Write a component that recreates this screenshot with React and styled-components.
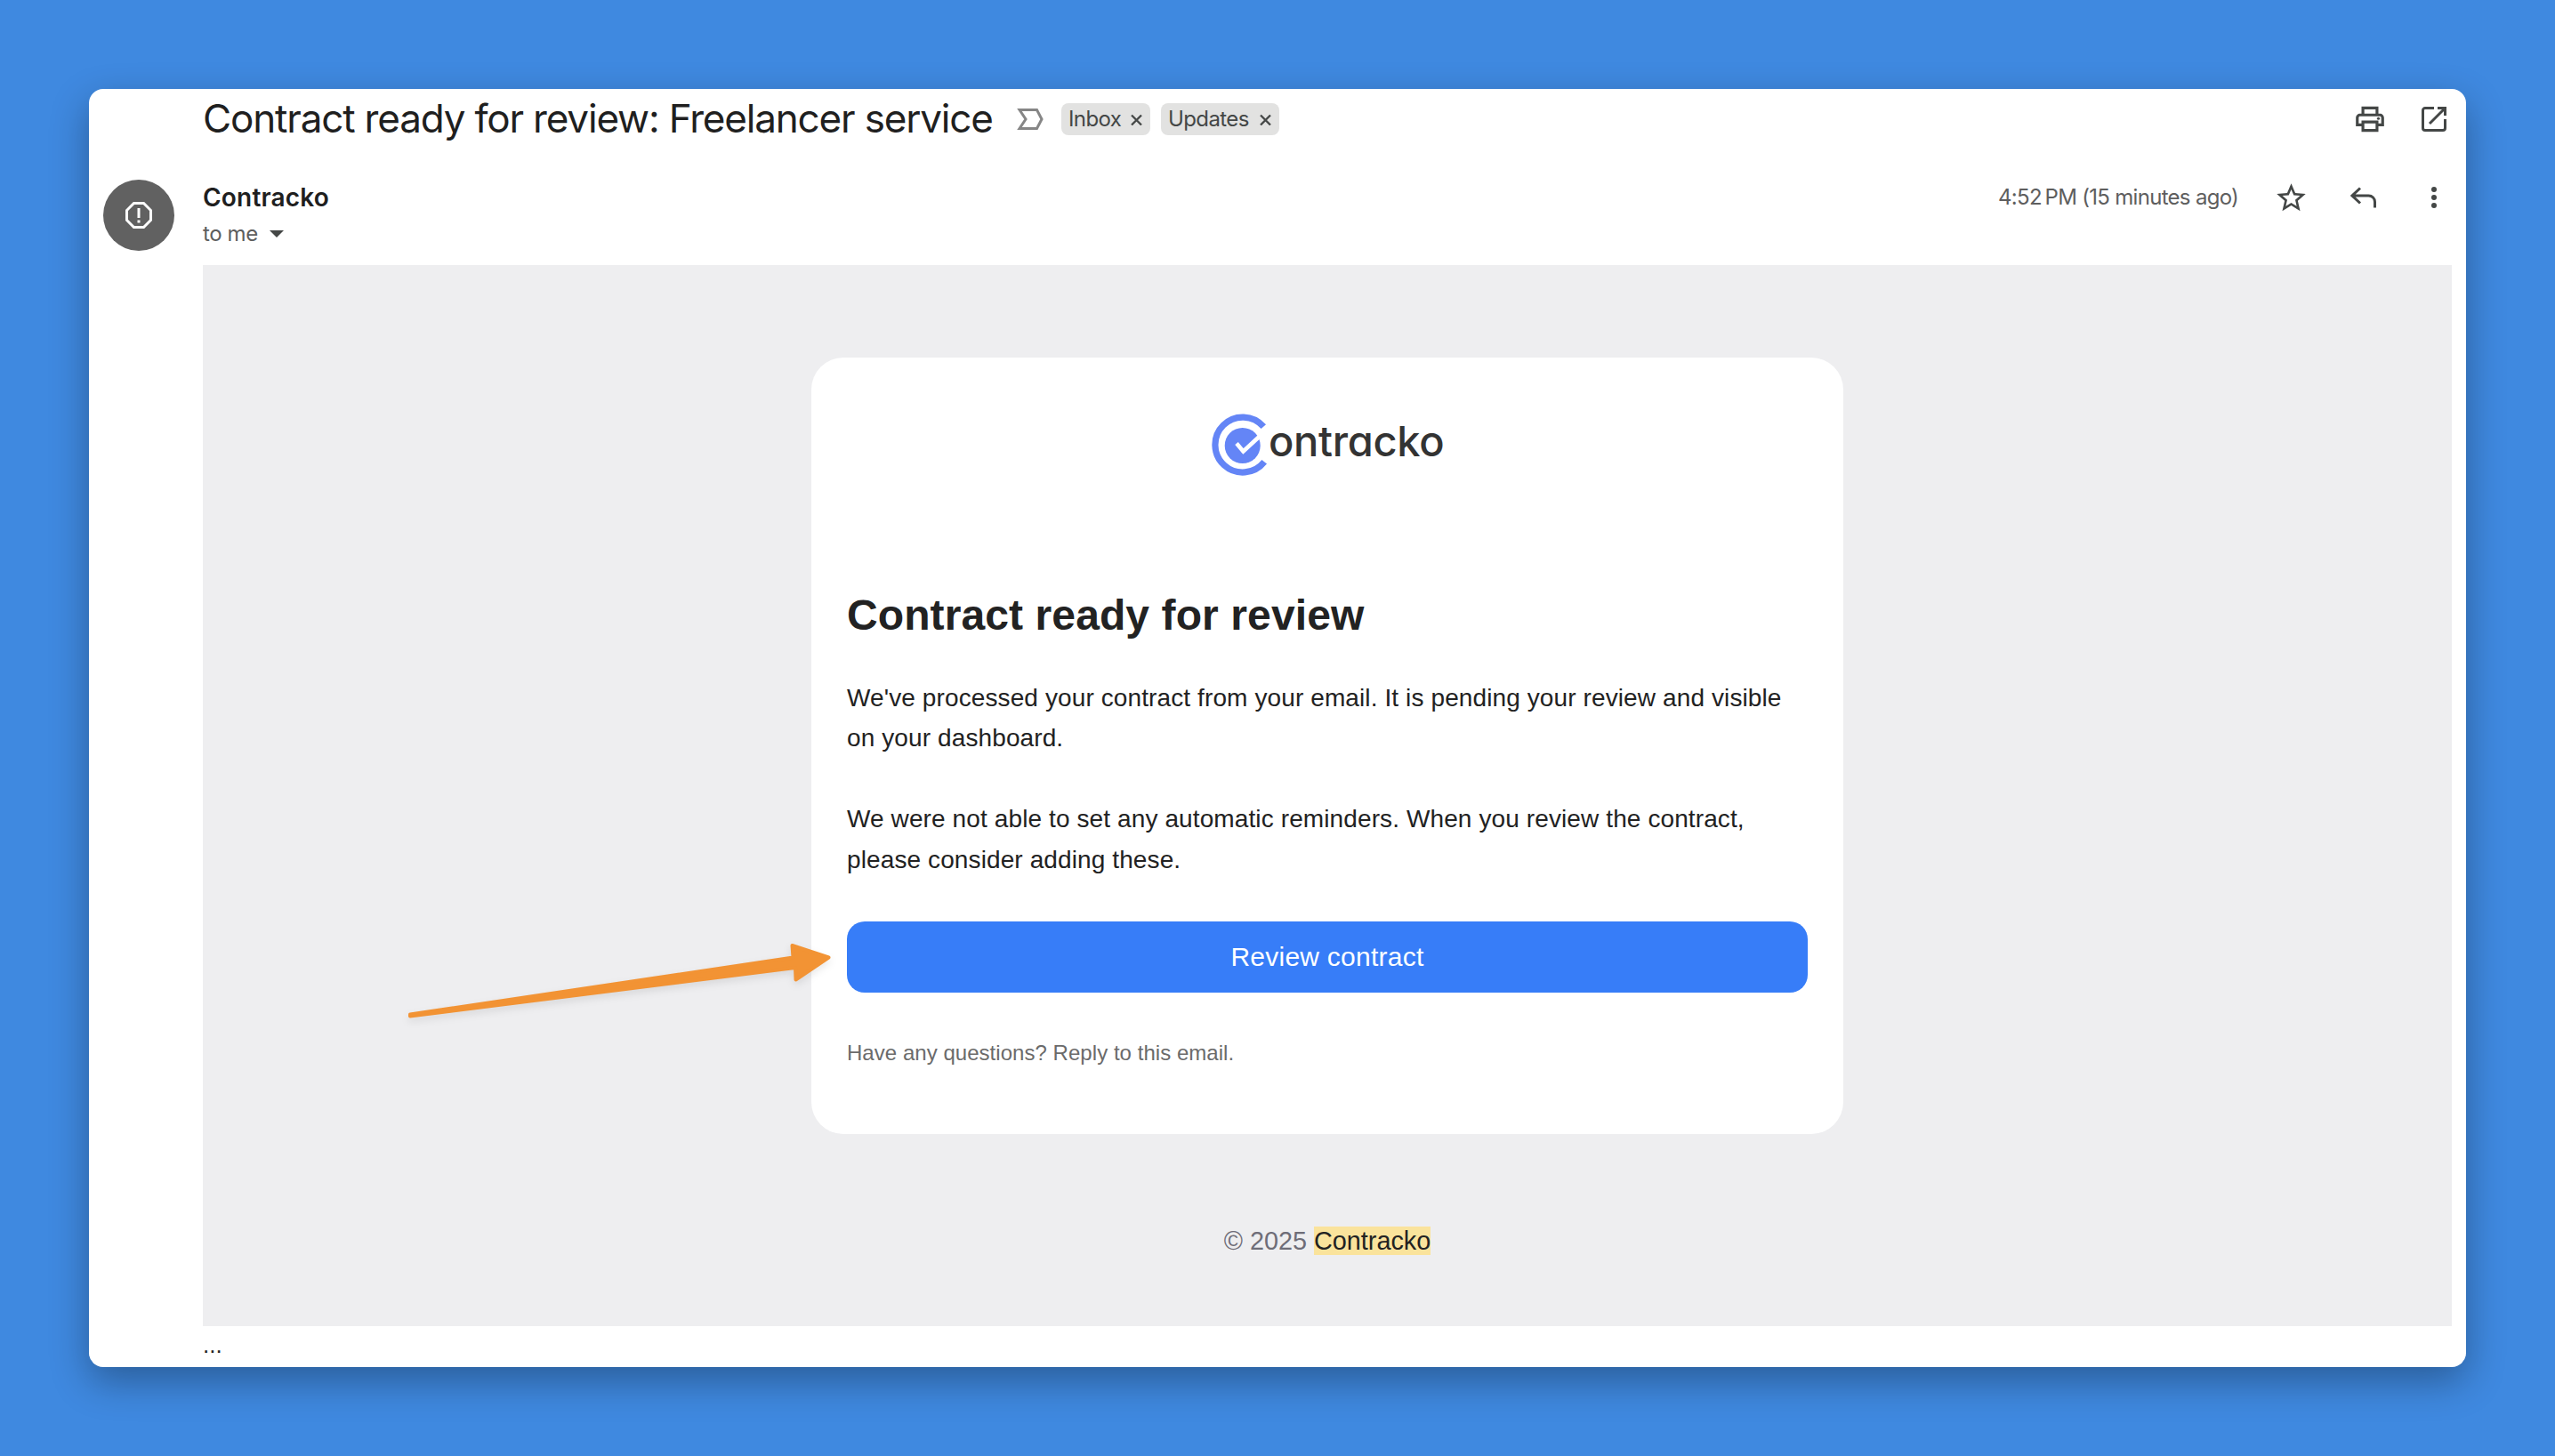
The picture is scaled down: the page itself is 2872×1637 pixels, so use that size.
import React from 'react';
import styled, { createGlobalStyle } from 'styled-components';
import { MdStarBorder, MdOutlinePrint } from 'react-icons/md';

const GlobalStyle = createGlobalStyle`
  * {
    box-sizing: border-box;
  }

  body {
    margin: 0;
    background: #3f89e0;
    font-family: Inter, 'Liberation Sans', sans-serif;
    color: #1f1f1f;
  }

  svg {
    flex: none;
  }
`;

const Page = styled.div`
  position: relative;
  width: 2872px;
  height: 1637px;
  padding: 100px;
  overflow: hidden;
  background: #3f89e0;
`;

const Window = styled.main`
  height: 1437px;
  padding: 0 16px 0 128px;
  border-radius: 16px;
  background: #fff;
  box-shadow: 0 16px 44px rgba(0, 0, 0, 0.32);
`;

const SubjectBar = styled.header`
  display: flex;
  align-items: center;
  height: 68px;
`;

const Subject = styled.h1`
  width: 915px;
  margin: 0;
  padding-bottom: 2px;
  font-size: 44px;
  font-weight: 400;
  line-height: 60px;
  letter-spacing: -1.17px;
  white-space: nowrap;
`;

const Labels = styled.div`
  display: flex;
  gap: 12px;
  margin-left: 20px;
`;

const Label = styled.span`
  display: flex;
  align-items: center;
  justify-content: space-between;
  width: ${props => props.$width}px;
  height: 36px;
  padding: 0 9px 0 8px;
  border-radius: 8px;
  background: #e2e2e1;
  color: #444746;
  font-size: 24px;
  line-height: 34px;
  letter-spacing: -0.6px;
  white-space: nowrap;
`;

const LabelName = styled.span`
  padding-bottom: 1px;
`;

const SubjectActions = styled.div`
  display: flex;
  align-items: center;
  gap: 39px;
  margin-left: auto;
  padding-right: 6px;
  color: #444746;
`;

const SenderBar = styled.section`
  display: flex;
  height: 130px;
  margin-left: -112px;
  padding-top: 34px;
`;

const Avatar = styled.div`
  display: flex;
  align-items: center;
  justify-content: center;
  width: 80px;
  height: 80px;
  margin-right: 32px;
  border-radius: 50%;
  background: #616161;
`;

const SenderInfo = styled.div`
  flex: 1;
`;

const SenderName = styled.div`
  font-size: 28px;
  font-weight: 600;
  line-height: 40px;
  letter-spacing: 0.2px;
`;

const Recipient = styled.div`
  display: flex;
  align-items: center;
  gap: 13px;
  color: #5e5e5e;
  font-size: 24px;
  line-height: 42px;
  letter-spacing: -0.4px;
`;

const MessageActions = styled.div`
  display: flex;
  align-items: center;
  height: 40px;
  padding-right: 17px;
  color: #444746;
`;

const Time = styled.span`
  width: 310px;
  padding-bottom: 2px;
  color: #5e5e5e;
  font-size: 24px;
  letter-spacing: -0.7px;
  white-space: nowrap;
`;

const ReplyButton = styled.span`
  display: flex;
  margin: 0 61px 0 47px;
`;

const MailBody = styled.section`
  display: flex;
  flex-direction: column;
  align-items: center;
  height: 1193px;
  padding-top: 104px;
  background: #eeeef0;
  font-family: 'Liberation Sans', Arial, sans-serif;
`;

const Card = styled.article`
  display: flex;
  flex-direction: column;
  width: 1160px;
  height: 873px;
  padding: 63px 40px 0;
  border-radius: 36px;
  background: #fff;
  color: #222;
`;

const Logo = styled.div`
  display: flex;
  align-self: center;
  width: 260px;
  height: 70px;
  margin-bottom: 127px;
`;

const LogoText = styled.span`
  margin-left: -6px;
  color: #333;
  font-family: Inter, sans-serif;
  font-size: 47px;
  font-weight: 500;
  font-feature-settings: 'cv11';
  line-height: 61px;
  letter-spacing: -0.3px;
`;

const Heading = styled.h2`
  margin: 0 0 40px;
  font-size: 48px;
  line-height: 60px;
  letter-spacing: 0.1px;
  white-space: nowrap;
`;

const Paragraph = styled.p`
  margin: 0 0 45.4px;
  font-size: 28px;
  line-height: 45.4px;
  letter-spacing: 0.11px;
  white-space: nowrap;
`;

const ReviewButton = styled.button`
  flex: none;
  height: 80px;
  margin: 2px 0 50px;
  border: 0;
  border-radius: 20px;
  background: #377df8;
  color: #fff;
  font: 30px 'Liberation Sans', Arial, sans-serif;
  letter-spacing: 0.25px;
`;

const Note = styled.div`
  color: #6b6b6b;
  font-size: 24px;
  line-height: 36px;
  letter-spacing: 0.04px;
`;

const Copyright = styled.footer`
  margin-top: 100px;
  color: #6e6d78;
  font-size: 28.8px;
  line-height: 40px;
`;

const Highlight = styled.mark`
  background: #fae39c;
  color: #222;
`;

const Trimmed = styled.div`
  font-family: 'Liberation Sans', Arial, sans-serif;
  font-size: 26px;
  line-height: 43px;
`;

const Pointer = styled.svg`
  position: absolute;
  left: 440px;
  top: 1040px;
  filter: drop-shadow(0 4px 4px rgba(0, 0, 0, 0.09));
`;

const labels = [
  { name: 'Inbox', width: 100 },
  { name: 'Updates', width: 133 },
];

const CloseIcon = () => (
  <svg width="13" height="13" viewBox="0 0 13 13" fill="none" stroke="#444746" strokeWidth="2.3">
    <path d="M1 1.500l11 11M12 1.500L1 12.500" />
  </svg>
);

const ImportantIcon = () => (
  <svg width="30" height="24" viewBox="0 0 30 24" fill="none" stroke="#868686" strokeWidth="3">
    <path d="M3 1.500h19.500L28 12l-5.500 10.500H3L10 12z" />
  </svg>
);

const OpenIcon = () => (
  <svg width="28" height="28" viewBox="0 0 28 28" fill="none" stroke="currentColor" strokeWidth="3">
    <path d="M14 1.500H4A2.500 2.500 0 0 0 1.500 4v20A2.500 2.500 0 0 0 4 26.500h20a2.500 2.500 0 0 0 2.500-2.500V14" />
    <path d="M18 1.500h8.500V10M26 2L9 19" />
  </svg>
);

const ReplyIcon = () => (
  <svg width="30" height="24" viewBox="0 0 30 24" fill="none" stroke="currentColor" strokeWidth="3">
    <path d="M11 1.500L2 10l9 8.500M2 10h18.500a7 7 0 0 1 7 7v6.500" />
  </svg>
);

const MoreIcon = () => (
  <svg width="6" height="24" viewBox="0 0 6 24" fill="currentColor">
    <circle cx="3" cy="3" r="3" />
    <circle cx="3" cy="12" r="3" />
    <circle cx="3" cy="21" r="3" />
  </svg>
);

const AlertIcon = () => (
  <svg width="30" height="30" viewBox="0 0 30 30" fill="none" stroke="#fff" strokeWidth="3">
    <path d="M9.500 1.500h11l8 8v11l-8 8h-11l-8-8v-11z" />
    <path d="M15 7v11M15 20.500v3" />
  </svg>
);

const LogoMark = () => (
  <svg width="70" height="70" viewBox="0 0 70 70" fill="none">
    <path d="M58.300 14.700A31 31 0 1 0 59.200 54.300" stroke="#6485f6" strokeWidth="7.200" />
    <circle cx="34.700" cy="36" r="20" fill="#6485f6" />
    <path d="M28 33.500l7.500 9L55 24.500" stroke="#fff" strokeWidth="4.600" />
  </svg>
);

const App = () => (
  <>
    <GlobalStyle />
    <Page>
      <Window>
        <SubjectBar>
          <Subject>Contract ready for review: Freelancer service</Subject>
          <ImportantIcon />
          <Labels>
            {labels.map((label) => (
              <Label key={label.name} $width={label.width}>
                <LabelName>{label.name}</LabelName>
                <CloseIcon />
              </Label>
            ))}
          </Labels>
          <SubjectActions>
            <MdOutlinePrint size={38} />
            <OpenIcon />
          </SubjectActions>
        </SubjectBar>

        <SenderBar>
          <Avatar>
            <AlertIcon />
          </Avatar>
          <SenderInfo>
            <SenderName>Contracko</SenderName>
            <Recipient>
              to me
              <svg width="16" height="8" viewBox="0 0 16 8" fill="#444746">
                <path d="M0 0h16L8 8z" />
              </svg>
            </Recipient>
          </SenderInfo>
          <MessageActions>
            <Time>4:52{'\u202f'}PM (15 minutes ago)</Time>
            <MdStarBorder size={39} />
            <ReplyButton>
              <ReplyIcon />
            </ReplyButton>
            <MoreIcon />
          </MessageActions>
        </SenderBar>

        <MailBody>
          <Card>
            <Logo>
              <LogoMark />
              <LogoText>ontracko</LogoText>
            </Logo>
            <Heading>Contract ready for review</Heading>
            <Paragraph>
              We've processed your contract from your email. It is pending your review and visible
              <br />
              on your dashboard.
            </Paragraph>
            <Paragraph>
              We were not able to set any automatic reminders. When you review the contract,
              <br />
              please consider adding these.
            </Paragraph>
            <ReviewButton>Review contract</ReviewButton>
            <Note>Have any questions? Reply to this email.</Note>
          </Card>
          <Copyright>
            © 2025 <Highlight>Contracko</Highlight>
          </Copyright>
        </MailBody>
        <Trimmed>...</Trimmed>
      </Window>

      <Pointer width="510" height="120" viewBox="440 1040 510 120">
        <path
          d="M461 1140.500L891.500 1076.500L890.500 1063L931.500 1076.500L894.500 1101.500L894 1088L461 1142.500z"
          fill="#f29334"
          stroke="#f29334"
          strokeWidth="4"
          strokeLinejoin="round"
        />
      </Pointer>
    </Page>
  </>
);

export default App;
